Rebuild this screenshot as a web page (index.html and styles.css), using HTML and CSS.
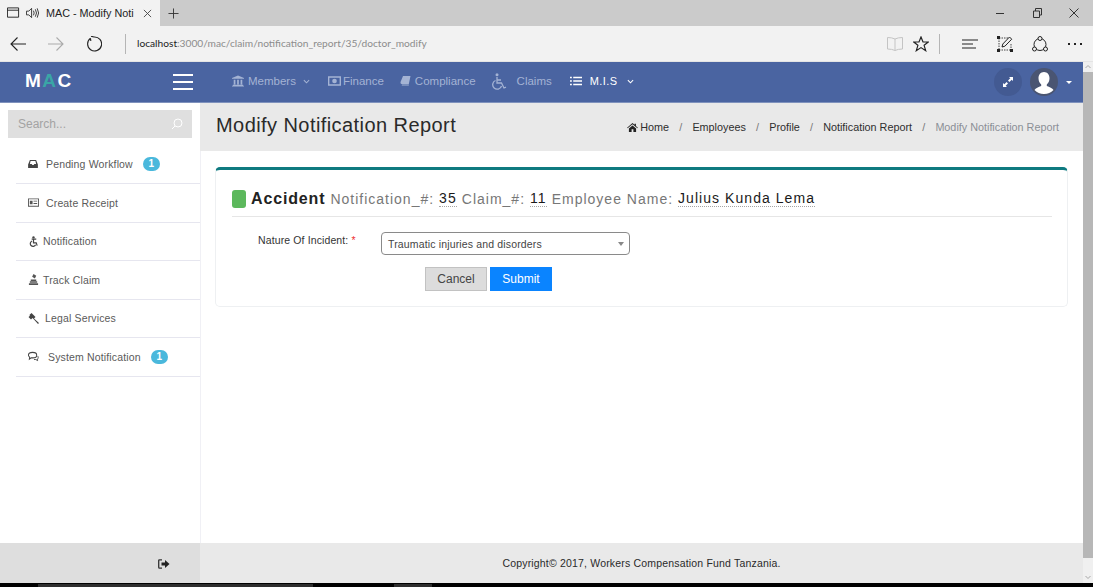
FILE: index.html
```html
<!DOCTYPE html>
<html lang="en">
<head>
<meta charset="utf-8">
<title>MAC - Modify Notification Report</title>
<link rel="stylesheet" href="styles.css">
</head>
<body>
<div class="browser">
  <div class="tabstrip">
    <div class="tab">
      <svg class="ic tab-page" viewBox="0 0 14 12"><path d="M.5.5h12v10H.5zM.5 3h12" fill="none" stroke="#222"/></svg>
      <svg class="ic tab-sound" viewBox="0 0 15 12"><path d="M.5 4h2.500L6 1v10L3 8H.5zM8 3.500q1.500 2.500 0 5M10 2q2.500 4 0 8M12 1q3 5 0 10" fill="none" stroke="#333"/></svg>
      <span class="tab-title">MAC - Modify Noti</span>
      <svg class="ic tab-x" viewBox="0 0 10 10"><path d="M1 1l8 8M9 1l-8 8" stroke="#444" fill="none"/></svg>
    </div>
    <svg class="ic tab-new" viewBox="0 0 12 12"><path d="M6 .5v11M.5 6h11" stroke="#333" fill="none"/></svg>
    <div class="win">
      <svg class="ic win-i" viewBox="0 0 10 10"><path d="M1 5.500h8" stroke="#333" fill="none"/></svg>
      <svg class="ic win-i" viewBox="0 0 10 10"><path d="M1.500 3h6v6.500h-6zM3.500 3V.5h6v6.500h-2" stroke="#333" fill="none"/></svg>
      <svg class="ic win-i" viewBox="0 0 10 10"><path d="M.5.5l9 9M9.500.5l-9 9" stroke="#333" fill="none"/></svg>
    </div>
  </div>
  <div class="toolbar">
    <svg class="ic tb-back" viewBox="0 0 16 14"><path d="M16 7H1M7.500.5L1 7l6.500 6.500" fill="none" stroke="#222" stroke-width="1.100"/></svg>
    <svg class="ic tb-fwd" viewBox="0 0 16 14"><path d="M0 7h15M8.500.5L15 7l-6.500 6.500" fill="none" stroke="#aaa" stroke-width="1.100"/></svg>
    <svg class="ic tb-reload" viewBox="0 0 16 16"><path d="M4.500 2.300A7 7 0 1 0 8 1M8 1L5 .2M4.500 2.300L4.800 5" fill="none" stroke="#222" stroke-width="1.100"/></svg>
    <span class="tb-sep"></span>
    <span class="url"><b>localhost</b>:3000/mac/claim/notification_report/35/doctor_modify</span>
    <svg class="ic tb-book" viewBox="0 0 16 14"><path d="M8 2Q5 .5.500.5v11.500Q5 12 8 13.500 11 12 15.500 12V.5Q11 .5 8 2zM8 2v11.500" fill="none" stroke="#c4c4c4"/></svg>
    <svg class="ic tb-star" viewBox="0 0 16 16"><path d="M8 1l2 5h5.300l-4.200 3.300 1.600 5.400L8 11.600l-4.700 3.100 1.600-5.400L.7 6H6z" fill="none" stroke="#222" stroke-width="1.200"/></svg>
    <span class="tb-sep tb-sep-right"></span>
    <svg class="ic tb-hub" viewBox="0 0 16 10"><path d="M0 1h16M0 5h11M0 9h14" stroke="#222" fill="none" stroke-width="1.100"/></svg>
    <svg class="ic tb-note" viewBox="0 0 16 16"><path d="M2 2h9M2 14h12M2 2v12M14 8v6" stroke="#444" stroke-dasharray="1.500 1" fill="none"/><path d="M5 11l.8-3L12.500 1l2.200 2.200-6.800 7z" fill="none" stroke="#222"/><path d="M0 0h3v3H0zM13 13h3v3h-3zM0 13h3v3H0z" fill="#222"/></svg>
    <svg class="ic tb-share" viewBox="0 0 16 16"><circle cx="8" cy="8.500" r="6" fill="none" stroke="#222"/><circle cx="8" cy="2.500" r="2" fill="#f2f2f2" stroke="#222"/><circle cx="2.500" cy="13" r="2" fill="#f2f2f2" stroke="#222"/><circle cx="13.500" cy="13" r="2" fill="#f2f2f2" stroke="#222"/></svg>
    <span class="tb-more"><i></i><i></i><i></i></span>
  </div>

  <div class="viewport">
    <div class="app">
      <header class="navbar">
        <div class="brand"><span>M</span><span class="brand-a">A</span><span>C</span></div>
        <button class="burger" type="button" aria-label="Menu"><i></i><i></i><i></i></button>
        <nav class="menu">
          <a class="menu-item mi-members"><svg class="ic" viewBox="0 0 14 13"><path d="M7 0l7 3v1H0V3zM1 11h12v1H1zM0 12h14v1H0zM2 5h2v5.500H2zM6 5h2v5.500H6zM10 5h2v5.500h-2z" fill="currentColor"/></svg>Members<svg class="chev" viewBox="0 0 8 5"><path d="M1 1l3 3 3-3" fill="none" stroke="currentColor" stroke-width="1.200"/></svg></a>
          <a class="menu-item mi-finance"><svg class="ic" viewBox="0 0 14 10"><path d="M0 0h14v10H0zM1.500 1.500v7h11v-7z" fill="currentColor" fill-rule="evenodd"/><circle cx="7" cy="5" r="2.500" fill="currentColor"/></svg>Finance</a>
          <a class="menu-item mi-compliance"><svg class="ic" viewBox="0 0 12 12"><path d="M3 0h9l-2 9.500H1.500q-1.500 0-1.500-1.500 0-.8.3-1.500zM1.800 10.200H10v1.300H2q-1.200 0-.2-1.300z" fill="currentColor"/></svg>Compliance</a>
          <a class="menu-item mi-claims"><svg class="ic" viewBox="0 0 16 17"><circle cx="6" cy="1.700" r="1.500" fill="currentColor"/><path d="M6 4v6h4.500l2.500 5 2-.8M6 7h4M4.500 7.500A4.500 4.500 0 1 0 10.500 13" fill="none" stroke="currentColor" stroke-width="1.300"/></svg><span>Claims</span></a>
          <a class="menu-item mi-mis"><svg class="ic" viewBox="0 0 13 10"><path d="M0 .5h2v1.400H0zM0 4.300h2v1.400H0zM0 8.100h2v1.400H0zM3.500.5H13v1.400H3.500zM3.500 4.300H13v1.400H3.500zM3.500 8.100H13v1.400H3.500z" fill="currentColor"/></svg><span>M.I.S</span><svg class="chev" viewBox="0 0 8 5"><path d="M1 1l3 3 3-3" fill="none" stroke="currentColor" stroke-width="1.200"/></svg></a>
        </nav>
        <div class="nav-right">
          <span class="circle"><svg class="ic expand" viewBox="0 0 10 10"><path d="M6 0h4v4L8.700 2.700 6.400 5 5 3.600l2.300-2.300zM4 10H0V6l1.300 1.300L3.600 5 5 6.400 2.700 8.700z" fill="#fff"/></svg></span>
          <span class="circle avatar"><svg viewBox="0 0 28 28"><path d="M14 4c3.400 0 5.500 2.800 5.500 6.300 0 2.700-1.200 4.900-2.700 6.200v1.400c2.600 1 5.700 2 6.700 4.100A13 13 0 0 1 14 26a13 13 0 0 1-9.500-4c1-2.100 4.100-3.100 6.700-4.100v-1.400c-1.500-1.300-2.700-3.500-2.700-6.200C8.500 6.800 10.600 4 14 4z" fill="#fff"/></svg></span>
          <span class="caret"></span>
        </div>
      </header>

      <div class="middle">
        <aside class="sidebar">
          <div class="search">
            <span>Search...</span>
            <svg class="ic" viewBox="0 0 12 12"><circle cx="7" cy="5" r="4" fill="none" stroke="#fff"/><path d="M4 8l-3 3" stroke="#fff" fill="none"/></svg>
          </div>
          <ul class="side-list">
            <li class="side-item"><svg class="ic inbox" viewBox="0 0 11 9"><path d="M2 0h7l2 5v4H0V5zM2 4.500h2l.8 1h1.400l.8-1h2L8.200 1.200H2.800z" fill="#444" fill-rule="evenodd"/></svg><span class="gap-a">Pending Workflow</span><span class="badge">1</span></li>
            <li class="side-item"><svg class="ic" viewBox="0 0 12 9"><path d="M0 0h12v9H0zM1 1v7h10V1z" fill="#555" fill-rule="evenodd"/><path d="M2 2.500h3v4H2zM6 2.500h4v1H6zM6 5h4v1H6z" fill="#555"/></svg><span class="gap-b">Create Receipt</span></li>
            <li class="side-item"><svg class="ic" viewBox="0 0 10 12"><circle cx="5" cy="1.500" r="1.300" fill="#444"/><path d="M3 3.500h5M5 3.500v4h3l1 3M3.500 5.500a3 3 0 1 0 3.800 4" fill="none" stroke="#444" stroke-width="1.300"/></svg><span class="gap-c">Notification</span></li>
            <li class="side-item"><svg class="ic" viewBox="0 0 10 12"><path d="M5 0l3 2-1.500 3L3.500 3zM2 6h6v1.500H2zM1 8h8v1.500H1zM0 10h10v2H0z" fill="#555"/></svg><span class="gap-c">Track Claim</span></li>
            <li class="side-item"><svg class="ic" viewBox="0 0 11 11"><path d="M3.500 0l4 4-2 2-1-.9-1.500 1.400L.5 4 2 2.700l-.6-.7zM6 5.500l5 4.500-1 1-4.500-5z" fill="#444"/></svg><span class="gap-d">Legal Services</span></li>
            <li class="side-item"><svg class="ic" viewBox="0 0 12 10"><path d="M5 .5c2.500 0 4.500 1.300 4.500 3s-2 3-4.500 3H3.500L1.500 8l.3-2.300C1 5 .5 4.300.5 3.500c0-1.700 2-3 4.500-3z" fill="none" stroke="#444" stroke-width="1.100"/><path d="M10.500 4.500c.8.800 1 2.500-.3 3.300l.3 1.700-2-1.200-2 0" fill="none" stroke="#444"/></svg><span class="gap-e">System Notification</span><span class="badge">1</span></li>
          </ul>
        </aside>

        <main class="content">
          <div class="page-head">
            <h1>Modify Notification Report</h1>
            <ol class="crumbs">
              <li><svg class="ic" viewBox="0 0 12 10"><path d="M6 0l2.300 2V.8h1.500v2.500L12 5.200l-.6.700L6 1.500.6 5.900 0 5.200zM2 6l4-3.200L10 6v4H7V7H5v3H2z" fill="#222"/></svg>Home</li>
              <li>Employees</li>
              <li>Profile</li>
              <li>Notification Report</li>
              <li class="current">Modify Notification Report</li>
            </ol>
          </div>
          <div class="page-body">
            <section class="card">
              <h2 class="card-title">
                <span class="dot"></span>
                <strong>Accident</strong>
                <span class="meta">Notification_#:</span>
                <span class="val">35</span>
                <span class="meta">Claim_#:</span>
                <span class="val">11</span>
                <span class="meta">Employee Name:</span>
                <span class="val">Julius Kunda Lema</span>
              </h2>
              <form class="form">
                <div class="field">
                  <label class="field-label">Nature Of Incident: <em>*</em></label>
                  <div class="select"><span>Traumatic injuries and disorders</span><i></i></div>
                </div>
                <div class="actions">
                  <button class="btn btn-cancel" type="button">Cancel</button>
                  <button class="btn btn-submit" type="button">Submit</button>
                </div>
              </form>
            </section>
          </div>
        </main>
      </div>

      <footer class="footer">
        <div class="foot-left"><svg class="ic" viewBox="0 0 12 10"><path d="M4 .8H1.500Q.7.800.7 1.700v6.600q0 .9.800.9H4" fill="none" stroke="#333" stroke-width="1.300"/><path d="M3.500 3.500h3.500V1l4.500 4L7 9V6.500H3.500z" fill="#222"/></svg></div>
        <div class="foot-main">Copyright© 2017, Workers Compensation Fund Tanzania.</div>
      </footer>
    </div>
    <div class="scrollbar">
      <svg class="sb-arrow" viewBox="0 0 10 10"><path d="M2.500 6L5 3.500 7.500 6" fill="none" stroke="#a8a8a8"/></svg>
      <span class="thumb"></span>
      <svg class="sb-arrow sb-down" viewBox="0 0 10 10"><path d="M2.500 4L5 6.500 7.500 4" fill="none" stroke="#a8a8a8"/></svg>
    </div>
  </div>
  <div class="taskbar"><i class="seg seg-a"></i><i class="seg seg-b"></i></div>
</div>
</body>
</html>
```
FILE: styles.css
```css
* { box-sizing: border-box; }
html, body { margin: 0; height: 100%; overflow: hidden; }
body { font-family: "Liberation Sans", Arial, sans-serif; color: #333; background: #000; }
.ic { display: block; flex: none; }
ul, ol { list-style: none; margin: 0; padding: 0; }

.browser { display: flex; flex-direction: column; width: 1093px; height: 587px; }

.tabstrip { display: flex; align-items: center; height: 26px; background: #cbcbcb; flex: none; }
.tab { display: flex; align-items: center; width: 160px; height: 26px; background: #f2f2f2; padding-left: 7px; }
.tab-page { width: 13px; height: 12px; }
.tab-sound { width: 14px; height: 12px; margin-left: 6px; }
.tab-title { font: 10.800px "Liberation Sans", sans-serif; color: #222; margin-left: 6px; width: 87px; white-space: nowrap; }
.tab-x { width: 9px; height: 9px; margin-left: 10px; }
.tab-new { width: 11px; height: 11px; margin-left: 8px; }
.win { display: flex; margin-left: auto; gap: 27px; padding-right: 14px; margin-top: 0; }
.win-i { width: 10px; height: 10px; }

.toolbar { display: flex; align-items: center; height: 36px; background: #f2f2f2; flex: none; border-bottom: 1px solid #e4e4e4; }
.tb-back { width: 16px; height: 14px; margin-left: 10px; }
.tb-fwd { width: 16px; height: 14px; margin-left: 22px; }
.tb-reload { width: 16px; height: 16px; margin-left: 22px; }
.tb-sep { width: 1px; height: 20px; background: #b5b5b5; margin-left: 23px; flex: none; }
.url { font: 10.200px/1 Lato, "Noto Sans", sans-serif; color: #8c8c8c; margin-left: 11px; white-space: nowrap; width: 750px; }
.url b { font-weight: 400; color: #222; }
.tb-book { width: 16px; height: 14px; margin-left: 0; }
.tb-star { width: 16px; height: 16px; margin-left: 10px; }
.tb-sep-right { margin-left: 10px; }
.tb-hub { width: 16px; height: 10px; margin-left: 22px; }
.tb-note { width: 16px; height: 16px; margin-left: 19px; }
.tb-share { width: 16px; height: 16px; margin-left: 19px; }
.tb-more { display: flex; gap: 4px; margin-left: 20px; }
.tb-more i { width: 2px; height: 2px; background: #222; }

.viewport { display: flex; flex: 1; min-height: 0; }
.app { display: flex; flex-direction: column; flex: 1; min-width: 0; background: #fff; }

.navbar { display: flex; align-items: center; height: 41px; flex: none; background: #4a64a1; border-bottom: 1px solid #7f92bd; }
.brand { width: 173px; padding-left: 25px; font: 700 19px/1 "Liberation Sans", sans-serif; color: #fff; letter-spacing: 1.500px; position: relative; top: -2px; flex: none; }
.brand-a { color: #3aa6a6; }
.burger { width: 20px; height: 16px; padding: 0; margin: 0; border: 0; background: none; display: flex; flex-direction: column; justify-content: space-between; flex: none; }
.burger i { display: block; height: 2px; background: #fff; }
.menu { display: flex; align-items: center; margin-left: 39px; padding-bottom: 2px; font-size: 11.500px; color: #a4b3d4; }
.menu-item { display: flex; align-items: center; white-space: nowrap; }
.mi-members .ic { width: 12px; height: 12px; margin-right: 4px; }
.chev { width: 7px; height: 5px; margin-left: 7px; display: block; flex: none; }
.mi-finance { margin-left: 18px; }
.mi-finance .ic { width: 13px; height: 10px; margin-right: 2px; }
.mi-compliance { margin-left: 16px; }
.mi-compliance .ic { width: 11px; height: 10px; margin-right: 4px; }
.mi-claims { margin-left: 15px; }
.mi-claims .ic { width: 16px; height: 17px; margin-right: 10px; }
.mi-mis { margin-left: 18px; color: #fff; }
.mi-mis .ic { width: 12px; height: 10px; margin-right: 8px; }
.mi-mis span { font-size: 11px; letter-spacing: .4px; }
.mi-mis .chev { margin-left: 10px; }
.nav-right { display: flex; align-items: center; margin-left: auto; padding-right: 11px; }
.circle { width: 28px; height: 28px; border-radius: 50%; background: #435a92; display: flex; align-items: center; justify-content: center; flex: none; }
.expand { width: 10px; height: 10px; }
.avatar { margin-left: 8px; background: #4a5572; overflow: hidden; }
.avatar svg { display: block; width: 28px; height: 28px; }
.caret { width: 0; height: 0; border-left: 3px solid transparent; border-right: 3px solid transparent; border-top: 3px solid #fff; margin-left: 8px; }

.middle { display: flex; flex: 1; min-height: 0; }
.sidebar { width: 200px; flex: none; padding: 7px 0 0; background: #fff; }
.search { display: flex; align-items: center; justify-content: space-between; width: 184px; height: 28px; margin-left: 8px; padding: 0 9px 0 10px; background: #dfdfdf; font-size: 12px; color: #a3a3a3; }
.search .ic { width: 12px; height: 12px; }
.side-list { margin: 7.500px 0 0 16px; }
.side-item { display: flex; align-items: center; height: 38.500px; padding-left: 12px; border-bottom: 1px solid #e6e6ef; font-size: 10.500px; color: #5a5a5a; letter-spacing: .15px; }
.side-item .ic { width: 11px; height: 11px; }
.side-item .inbox { width: 10px; height: 8px; }
.gap-a { margin-left: 8px; }
.gap-b { margin-left: 7px; }
.gap-c { margin-left: 4px; }
.gap-d { margin-left: 6px; }
.gap-e { margin-left: 9px; }
.badge { width: 17px; height: 14px; margin-left: 10px; border-radius: 8px; background: #4ab8dc; color: #fff; font: 700 10px/14px "Liberation Sans", sans-serif; text-align: center; letter-spacing: 0; }

.content { display: flex; flex-direction: column; flex: 1; min-width: 0; background: #fff; }
.page-head { display: flex; align-items: center; height: 48px; flex: none; padding: 0 24px 0 16px; background: #e9e9e9; }
.page-head h1 { margin: 0; font-size: 20px; font-weight: 400; color: #2a2a2a; letter-spacing: .43px; position: relative; top: -2px; }
.crumbs { display: flex; align-items: center; margin-left: auto; font-size: 10.800px; color: #2e2e2e; }
.crumbs li { display: flex; align-items: center; }
.crumbs li + li::before { content: "/"; color: #777; margin: 0 10.200px; }
.crumbs .ic { width: 11px; height: 9px; margin-right: 2px; }
.crumbs .current { color: #8b8f96; }

.page-body { flex: 1; border-left: 1px solid #f0f0f5; padding: 16px 0 0 14px; }
.card { width: 853px; height: 140px; padding: 0 15px 0 16px; background: #fff; border: 1px solid #eef0f2; border-top: 3px solid #0e7a80; border-radius: 5px; }
.card-title { display: flex; align-items: center; height: 47px; margin: 0; border-bottom: 1px solid #e6e6e6; font-weight: 400; font-size: 14px; letter-spacing: 1px; color: #777; padding-top: 12px; }
.dot { width: 14px; height: 18px; background: #5cb85c; border-radius: 3px; margin-right: 5px; flex: none; }
.card-title strong { font-size: 16px; color: #222; font-weight: 700; letter-spacing: .85px; margin-right: 5px; }
.meta { margin-right: 5px; }
.val { color: #1a1a1a; border-bottom: 1px dotted #a5a5a5; line-height: 15px; margin-right: 5px; letter-spacing: 1.050px; }
.form { display: flex; flex-direction: column; }
.field { display: flex; align-items: flex-start; margin-top: 15px; }
.field-label { width: 149px; padding: 2px 0 0 26px; font-size: 10.500px; color: #333; letter-spacing: .12px; }
.field-label em { color: #e33; font-style: normal; }
.select { position: relative; display: flex; align-items: center; width: 249px; height: 23px; padding-left: 6px; border: 1px solid #8a8a8a; border-radius: 4px; font-size: 10.500px; color: #444; background: #fff; letter-spacing: .15px; }
.select i { position: absolute; right: 5px; top: 9px; width: 0; height: 0; border-left: 3.500px solid transparent; border-right: 3.500px solid transparent; border-top: 4px solid #888; }
.actions { display: flex; gap: 3px; margin: 12px 0 0 193px; }
.btn { width: 62px; height: 24px; padding: 0; font: 12px "Liberation Sans", sans-serif; border-radius: 0; }
.btn-cancel { background: #dcdcdc; border: 1px solid #c2c2c2; color: #444; }
.btn-submit { background: #0a84ff; border: 1px solid #0a84ff; color: #fff; }

.footer { display: flex; height: 40px; flex: none; }
.foot-left { display: flex; align-items: center; justify-content: flex-end; width: 200px; padding: 2px 30px 0 0; background: #dedede; }
.foot-left .ic { width: 12px; height: 10px; }
.foot-main { flex: 1; display: flex; align-items: center; justify-content: center; background: #e9e9e9; font-size: 10.500px; color: #2a2a2a; letter-spacing: .18px; }

.scrollbar { display: flex; flex-direction: column; width: 10px; flex: none; background: #f0f0f0; }
.sb-arrow { display: block; width: 10px; height: 10px; flex: none; }
.thumb { display: block; height: 486px; background: #b7b7b7; flex: none; }
.sb-down { margin-top: auto; margin-bottom: 1px; }

.taskbar { display: flex; align-items: flex-end; height: 4px; flex: none; background: #000; padding-left: 38px; }
.seg { display: block; height: 3px; background: #2e2e2e; }
.seg-a { width: 275px; }
.seg-b { width: 38px; margin-left: 81px; }
```
